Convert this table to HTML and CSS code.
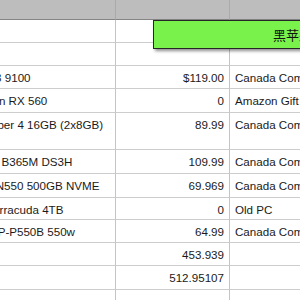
FILE: index.html
```html
<!DOCTYPE html>
<html lang="en">
<head>
<meta charset="utf-8">
<title>Build list</title>
<link rel="stylesheet" href="styles.css">
</head>
<body>
<div class="viewport">
  <div class="sheet">
    <div class="cell head"></div><div class="cell head"></div><div class="cell head last"></div>

    <div class="cell"></div><div class="cell num"></div><div class="cell last"></div>
    <div class="cell"></div><div class="cell num"></div><div class="cell last"></div>

    <div class="cell">Intel Core i3 9100</div><div class="cell num">$119.00</div><div class="cell last">Canada Computers</div>
    <div class="cell">XFX Radeon RX 560</div><div class="cell num">0</div><div class="cell last">Amazon Gift Card</div>
    <div class="cell">Patriot™ Viper 4 16GB (2x8GB)</div><div class="cell num">89.99</div><div class="cell last">Canada Computers</div>
    <div class="cell">GIGABYTE B365M DS3H</div><div class="cell num">109.99</div><div class="cell last">Canada Computers</div>
    <div class="cell">WD Blue SN550 500GB NVME</div><div class="cell num">69.969</div><div class="cell last">Canada Computers</div>
    <div class="cell">Seagate Barracuda 4TB</div><div class="cell num">0</div><div class="cell last">Old PC</div>
    <div class="cell">Gigabyte GP-P550B 550w</div><div class="cell num">64.99</div><div class="cell last">Canada Computers</div>
    <div class="cell"></div><div class="cell num">453.939</div><div class="cell last"></div>
    <div class="cell"></div><div class="cell num">512.95107</div><div class="cell last"></div>
    <div class="cell"></div><div class="cell num"></div><div class="cell last"></div>
  </div>
  <div class="title-box">黑苹果配置清单</div>
</div>
</body>
</html>
```

FILE: styles.css
```css
html, body {
  margin: 0;
  padding: 0;
  background: #ffffff;
}

.viewport {
  position: relative;
  width: 300px;
  height: 300px;
  overflow: hidden;
  font-family: "Liberation Sans", Arial, sans-serif;
  font-size: 11.6px;
  color: #1a1a1a;
}

/* sheet is scrolled horizontally: column A starts left of the window */
.sheet {
  display: grid;
  margin-left: -66px;
  grid-template-columns: 182px 114px 160px;
  grid-template-rows: 20px 23px 23px 23px 24px 37px 24px 24px 22px 23px 23px 24px 23px;
}

.cell {
  box-sizing: border-box;
  border-right: 1px solid #c4c4c4;
  border-bottom: 1px solid #cdcdcd;
  padding: 4px 5px 0 5px;
  line-height: 15px;
  white-space: nowrap;
  overflow: hidden;
}

.cell.last {
  border-right: none;
}

.cell.num {
  text-align: right;
}

.cell.head {
  background: #bdbdbd;
  border-right-color: #aaaaaa;
  border-bottom-color: #858585;
  padding: 0;
}

.title-box {
  position: absolute;
  left: 153px;
  top: 20px;
  width: 331px;
  height: 29px;
  box-sizing: border-box;
  background: #7af24c;
  border: 1px solid #262626;
  box-shadow: 2px 2px 3px rgba(0, 0, 0, 0.45);
  font-family: "Noto Sans CJK SC", "Noto Sans", sans-serif;
  font-size: 13px;
  line-height: 27px;
  text-align: center;
  color: #111111;
  white-space: nowrap;
}
```
